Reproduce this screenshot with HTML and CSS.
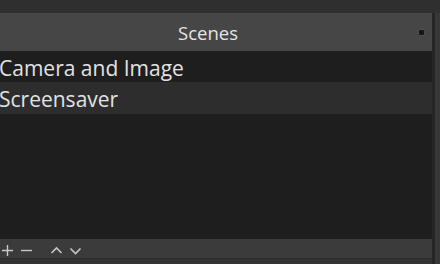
FILE: index.html
```html
<!doctype html>
<html lang="en">
  <head>
    <meta charset="UTF-8" />
    <title>Scenes</title>
    <link rel="stylesheet" href="styles.css">
  </head>
  <body>
    <div class="top-strip"></div>
    <div class="dock">
      <div class="panel">
        <div class="panel-header">
          <span class="panel-title">Scenes</span>
          <span class="float-button"></span>
        </div>
        <div class="scene-list">
          <div class="scene-item">Camera and Image</div>
          <div class="scene-item selected">Screensaver</div>
        </div>
        <div class="toolbar">
          <svg class="tool" width="13" height="13" viewBox="0 0 13 13">
            <path d="M6.5 1v11M1 6.5h11" stroke="#c8c8c8" stroke-width="1.4" fill="none" />
          </svg>
          <svg class="tool" width="13" height="13" viewBox="0 0 13 13">
            <path d="M1 6.5h11" stroke="#c8c8c8" stroke-width="1.4" fill="none" />
          </svg>
          <svg class="tool tool-gap" width="13" height="13" viewBox="0 0 13 13">
            <path d="M1.5 9l5-5 5 5" stroke="#c8c8c8" stroke-width="1.6" fill="none" />
          </svg>
          <svg class="tool" width="13" height="13" viewBox="0 0 13 13">
            <path d="M1.5 4.5l5 5 5-5" stroke="#c8c8c8" stroke-width="1.6" fill="none" />
          </svg>
        </div>
        <div class="bottom-strip"></div>
      </div>
      <div class="dock-edge"></div>
    </div>
  </body>
</html>
```

FILE: styles.css
```css
html,
body {
  width: 100%;
  height: 100%;
  overflow: hidden;
  padding: 0;
  margin: 0;
}

body {
  display: flex;
  flex-direction: column;
  background-color: #2f2f2f;
  font-family: "Open Sans", "Noto Sans", sans-serif;
  color: #e2e2e2;
}

.top-strip {
  flex: 0 0 13px;
  background-color: #2f2f2f;
}

.dock {
  flex: 1;
  display: flex;
  min-height: 0;
}

.panel {
  width: 432px;
  display: flex;
  flex-direction: column;
}

.dock-edge {
  flex: 1;
  border-left: 3px solid #262626;
  background-color: #383838;
}

.panel-header {
  flex: 0 0 38px;
  background-color: #464646;
  display: flex;
  align-items: center;
  justify-content: center;
  position: relative;
}

.panel-title {
  font-size: 18.5px;
  color: #e4e4e4;
  margin-left: -16px;
}

.float-button {
  position: absolute;
  right: 7px;
  top: 16px;
  width: 5px;
  height: 5px;
  background-color: #151515;
  border: 1px solid #4e4e4e;
  border-radius: 2px;
}

.scene-list {
  flex: 1;
  background-color: #1f1e1f;
}

.scene-item {
  height: 31px;
  line-height: 34px;
  font-size: 21px;
  margin-left: -1px;
  white-space: nowrap;
  overflow: hidden;
}

.scene-item.selected {
  background-color: #2e2d2e;
  height: 32px;
}

.toolbar {
  flex: 0 0 19px;
  background-color: #3b3b3b;
  display: flex;
  align-items: center;
  padding-left: 1px;
  padding-top: 4px;
  box-sizing: border-box;
  gap: 6px;
}

.tool-gap {
  margin-left: 11px;
}

.bottom-strip {
  flex: 0 0 5px;
  background-color: #333;
  border-top: 1px solid #2c2c2c;
}
```
